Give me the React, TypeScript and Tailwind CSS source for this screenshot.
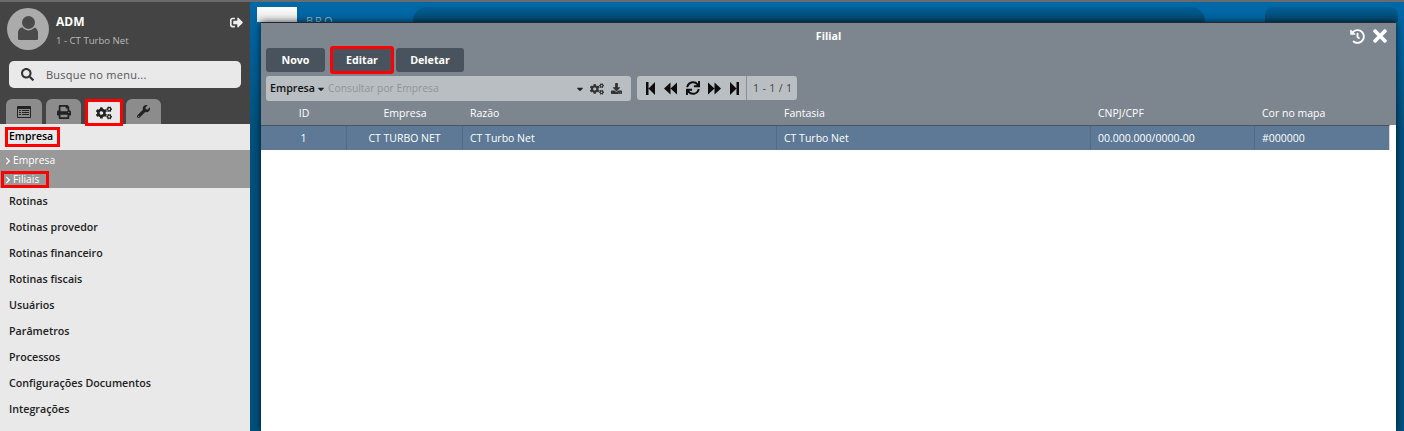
import {
  FaCaretDown,
  FaChevronRight,
  FaCogs,
  FaDownload,
  FaHistory,
  FaPrint,
  FaSearch,
  FaSignOutAlt,
  FaSync,
  FaTimes,
  FaWrench,
} from "react-icons/fa";

const menuItems = [
  "Rotinas",
  "Rotinas provedor",
  "Rotinas financeiro",
  "Rotinas fiscais",
  "Usuários",
  "Parâmetros",
  "Processos",
  "Configurações Documentos",
  "Integrações",
];

const columns = [
  { label: "ID", value: "1", width: "w-[86px]", center: true },
  { label: "Empresa", value: "CT TURBO NET", width: "w-[116px]", center: true },
  { label: "Razão", value: "CT Turbo Net", width: "w-[314px]" },
  { label: "Fantasia", value: "CT Turbo Net", width: "w-[314px]" },
  { label: "CNPJ/CPF", value: "00.000.000/0000-00", width: "w-[164px]" },
  { label: "Cor no mapa", value: "#000000", width: "w-[133px]" },
];

function Avatar() {
  return (
    <svg width="42" height="42" viewBox="0 0 42 42" className="shrink-0">
      <circle cx="21" cy="21" r="21" fill="#ababab" />
      <path d="M11 31 V25 C11 21 14 19 17 19 H25 C28 19 31 21 31 25 V31 Q31 32 30 32 H12 Q11 32 11 31 Z" fill="#4a4a4a" />
      <circle cx="21.5" cy="14.5" r="7.2" fill="#4a4a4a" stroke="#ababab" strokeWidth="1.4" />
    </svg>
  );
}

function ListIcon() {
  return (
    <svg width="14" height="12" viewBox="0 0 14 12" className="text-[#222222]">
      <rect x="0" y="0" width="14" height="12" rx="1" fill="currentColor" />
      <rect x="1" y="3" width="12" height="8" fill="#8c8c8c" />
      <path d="M2 4.5h2M5 4.5h7M2 6.5h2M5 6.5h7M2 8.5h2M5 8.5h7" stroke="currentColor" strokeWidth="1" />
    </svg>
  );
}

function PagerIcon({ type }: { type: "first" | "prev" | "next" | "last" }) {
  const flip = type === "next" || type === "last" ? "scale(-1 1)" : undefined;
  const step = type === "first" || type === "last";
  return (
    <svg width={step ? 9 : 13} height="13" viewBox={step ? "0 0 9 13" : "0 0 13 13"} fill="#0c0c0c">
      <g transform={flip} style={{ transformOrigin: "center" }}>
        {step ? (
          <path d="M0 0h2.5v13H0z M9 0v13L2.5 6.5z" />
        ) : (
          <path d="M6.5 0.5v12L0 6.5z M13 0.5v12L6.5 6.5z" />
        )}
      </g>
    </svg>
  );
}

function Sidebar() {
  return (
    <aside className="w-[250px] h-full shrink-0 flex flex-col bg-[#444444] border-t-2 border-[#6b6b6b]">
      {/* User */}
      <div className="flex pl-[7px] pt-[6px] h-[42px] box-content">
        <Avatar />
        <div className="ml-[7px] pt-[5px] flex-1">
          <div className="text-[12px] leading-[17px] font-bold text-white">ADM</div>
          <div className="text-[9.6px] leading-[14px] mt-[4px] text-[#b9b9b9]">1 - CT Turbo Net</div>
        </div>
        <FaSignOutAlt className="text-[#f0f0f0] text-[13px] mt-[8px] mr-[7px]" />
      </div>

      {/* Search */}
      <div className="mx-[9px] mt-[11px] h-[27px] rounded-[5px] bg-[#e9e9e9] flex items-center pl-[12px]">
        <FaSearch className="text-[#333333] text-[13px]" />
        <span className="ml-[12px] pt-[1px] text-[11px] tracking-[0.25px] text-[#555555]">Busque no menu...</span>
      </div>

      {/* Tabs */}
      <div className="flex items-end mt-[11px] pl-[6px] h-[25px] gap-[4px]">
        <div className="w-[36px] h-[25px] rounded-t-[6px] bg-[#8c8c8c] flex items-center justify-center">
          <ListIcon />
        </div>
        <div className="w-[35px] h-[25px] rounded-t-[6px] bg-[#8c8c8c] flex items-center justify-center">
          <FaPrint className="text-[#222222] text-[14px]" />
        </div>
        <div className="w-[38px] h-[27px] -mb-[2px] bg-[#e9e9e9] border-[3px] border-[#ff0000] flex items-center justify-center z-10">
          <FaCogs className="text-[#222222] text-[16px]" />
        </div>
        <div className="w-[35px] h-[25px] -ml-[1px] rounded-t-[6px] bg-[#8c8c8c] flex items-center justify-center">
          <FaWrench className="text-[#222222] text-[13px]" />
        </div>
      </div>

      {/* Menu */}
      <nav className="flex-1 bg-[#e9e9e9] overflow-hidden">
        <div className="h-[26px] flex items-center pl-[5px]">
          <span className="border-[3px] border-[#ff0000] h-[20px] w-[55px] pl-[1px] flex items-center text-[10.5px] font-semibold text-black">
            Empresa
          </span>
        </div>
        <div className="h-[38px] bg-[#999999] text-[10.3px] text-white">
          <div className="flex items-center h-[21px] pl-[4px]">
            <FaChevronRight className="text-[8px]" />
            <span className="ml-[1px]">Empresa</span>
          </div>
          <div className="flex items-center h-[17px] w-[48px] ml-[1px] pl-[3px] border-[3px] border-[#ff0000]">
            <FaChevronRight className="text-[8px] -ml-[3px] shrink-0" />
            <span className="ml-[1px]">Filiais</span>
          </div>
        </div>
        <ul>
          {menuItems.map((item) => (
            <li key={item} className="h-[26px] pl-[9px] flex items-center text-[10.7px] font-semibold text-[#222222]">
              {item}
            </li>
          ))}
        </ul>
      </nav>
    </aside>
  );
}

function Toolbar() {
  return (
    <>
      <div className="flex pl-[5px] h-[24px]">
        <button className="w-[59px] h-[24px] rounded-[3px] bg-[#49535d] text-[10.7px] font-bold text-white">Novo</button>
        <button className="ml-[5px] w-[64px] h-[28px] -mt-[2px] border-[3px] border-[#ff0000] rounded-[3px] bg-[#49535d] text-[10.7px] font-bold text-white">
          Editar
        </button>
        <button className="ml-[2px] w-[68px] h-[24px] rounded-[3px] bg-[#49535d] text-[10.7px] font-bold text-white">Deletar</button>
      </div>
      <div className="flex pl-[5px] mt-[4px] h-[25px]">
        <div className="w-[365px] rounded-[3px] bg-[#b9bec2] flex items-center pl-[4px] pr-[9px]">
          <span className="text-[10.7px] font-semibold text-[#111111]">Empresa</span>
          <FaCaretDown className="text-[10px] text-[#222222] ml-[1px]" />
          <span className="ml-[2px] flex-1 text-[10.3px] text-[#8f959a]">Consultar por Empresa</span>
          <FaCaretDown className="text-[10px] text-[#222222]" />
          <FaCogs className="text-[14px] text-[#333333] ml-[5px]" />
          <FaDownload className="text-[11px] text-[#333333] ml-[7px]" />
        </div>
        <div className="ml-[6px] h-[24px] w-[160px] rounded-[3px] bg-[#b9bec2] flex items-center">
          <div className="w-[110px] h-full flex items-center justify-between pl-[9px] pr-[7px] border-r border-[#8a9096] text-[#0c0c0c]">
            <PagerIcon type="first" />
            <PagerIcon type="prev" />
            <FaSync className="text-[14px]" />
            <PagerIcon type="next" />
            <PagerIcon type="last" />
          </div>
          <span className="pl-[6px] text-[10.7px] tracking-[0.3px] text-[#444444]">1 - 1 / 1</span>
        </div>
      </div>
    </>
  );
}

function Modal() {
  return (
    <section className="absolute left-[11px] right-[8px] top-[20px] bottom-0 bg-white border-t border-[#222a30] flex flex-col shadow-[0_0_7px_rgba(0,0,0,0.7)]">
      <div className="bg-[#7d868f]">
        <header className="h-[25px] relative flex items-center justify-center pt-[1px]">
          <span className="text-[10.7px] font-bold text-white">Filial</span>
          <div className="absolute right-[6px] top-[3px] flex items-center gap-[5px] text-white">
            <FaHistory className="text-[15px]" />
            <FaTimes className="text-[20px]" />
          </div>
        </header>
        <Toolbar />
        <div className="flex h-[24px] items-center pt-[1px] text-[10.5px] text-white">
          {columns.map((c) => (
            <div key={c.label} className={`${c.width} ${c.center ? "text-center" : "pl-[7px]"}`}>
              {c.label}
            </div>
          ))}
        </div>
      </div>
      <div className="h-[25px] w-[1129px] flex border-t border-r border-t-[#4a545e] border-r-[#d8d8d8] bg-[#5d7995] text-[10.5px] text-white">
        {columns.map((c) => (
          <div
            key={c.label}
            className={`${c.width} flex items-center pt-[1px] border-r border-[#526c86] last:border-r-0 ${
              c.center ? "justify-center" : "pl-[7px]"
            }`}
          >
            {c.value}
          </div>
        ))}
      </div>
    </section>
  );
}

export default function App() {
  return (
    <div className="w-[1404px] h-[431px] flex overflow-hidden font-['Open_Sans','Noto_Sans',sans-serif]">
      <Sidebar />
      <main className="relative flex-1 border-t-2 border-[#6b6b6b] bg-gradient-to-b from-[#0169a8] to-[#01507c] to-[30%]">
        {/* Page header behind the modal */}
        <div className="flex items-start pt-[5px] pl-[7px] h-[20px] overflow-hidden">
          <div className="w-[40px] h-[20px] bg-gradient-to-b from-white to-[#d8d8d8] shrink-0" />
          <span className="w-[116px] pl-[9px] pt-[7px] text-[11px] leading-[13px] tracking-[2px] text-[#9db8c9] shrink-0">BRO —</span>
          <div className="w-[792px] h-[20px] rounded-t-[14px] bg-gradient-to-b from-[#015f95] to-[#013f63] shrink-0" />
          <div className="ml-[60px] w-[133px] h-[20px] rounded-t-[8px] bg-gradient-to-b from-[#015f95] to-[#013f63] shrink-0" />
        </div>
        <Modal />
      </main>
    </div>
  );
}
